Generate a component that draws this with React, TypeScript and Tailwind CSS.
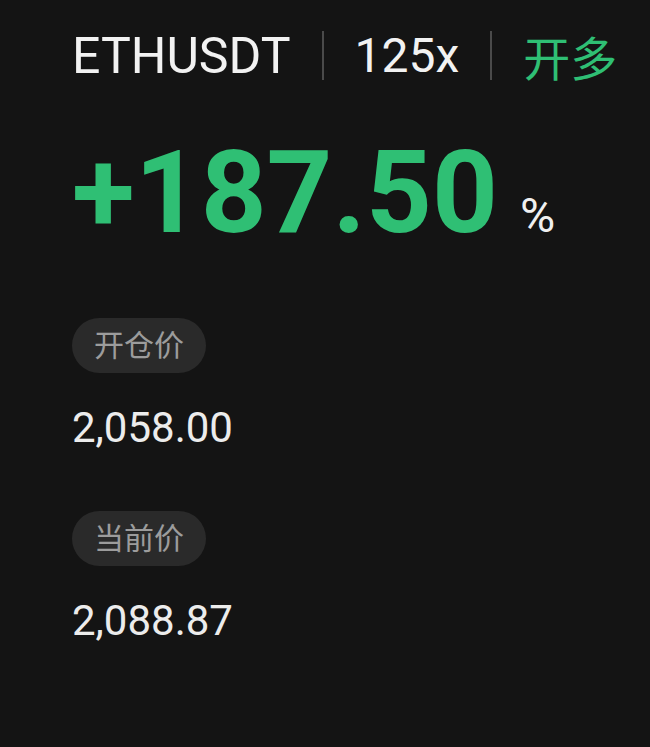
import React from 'react'

const font = { fontFamily: 'Roboto, "Noto Sans CJK SC", sans-serif' }

function Sep(){
  return <div className="w-[2px] self-stretch bg-[#4a4a4a]" />
}

function PriceBlock({ label, value }: { label: string; value: string }){
  return (
    <div className="flex flex-col items-start">
      <div className="h-[55px] px-[22px] rounded-full bg-[#2a2a2a] flex items-center text-[30px] leading-none text-[#9c9c9c]">
        {label}
      </div>
      <div className="mt-[34px] text-[42px] leading-none text-[#ececec]">{value}</div>
    </div>
  )
}

export default function App(){
  return (
    <div className="w-[650px] h-[747px] bg-[#141414] pl-[72px] pt-[31px]" style={font}>
      <header className="flex items-center gap-[31px] h-[49px] text-[50px] leading-none">
        <span className="text-[#f2f2f2]">ETHUSDT</span>
        <Sep />
        <span className="text-[#f2f2f2] text-[48px]">125x</span>
        <Sep />
        <span className="text-[#2fbf74] text-[47px]" style={{ fontFamily: '"Noto Sans CJK SC", sans-serif' }}>开多</span>
      </header>

      <section className="mt-[55px] flex items-baseline">
        <span className="text-[115px] font-bold leading-none text-[#2fbf74]">+187.50</span>
        <span className="ml-[22px] mb-[4px] text-[48px] leading-none text-[#f0f0f0]">%</span>
      </section>

      <section className="mt-[68px] flex flex-col gap-[62px]">
        <PriceBlock label="开仓价" value="2,058.00" />
        <PriceBlock label="当前价" value="2,088.87" />
      </section>
    </div>
  )
}
